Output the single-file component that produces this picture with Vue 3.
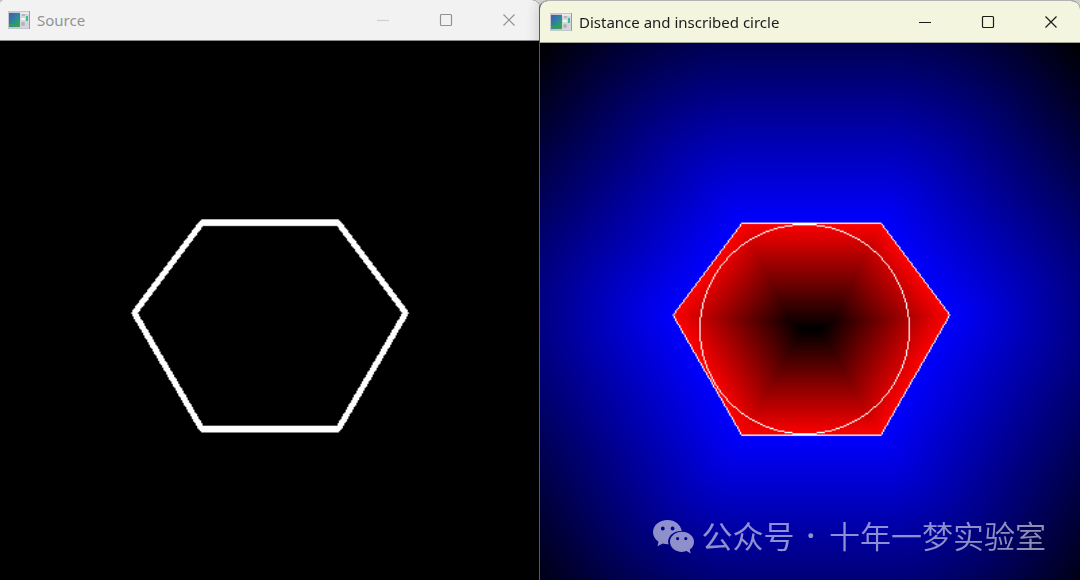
<script setup>
import { onMounted, ref } from 'vue'

const SIZE = 400
const sourceCanvas = ref(null)
const distanceCanvas = ref(null)

const windows = [
  { name: 'source', title: 'Source', canvas: sourceCanvas },
  { name: 'distance', title: 'Distance and inscribed circle', canvas: distanceCanvas },
]

const outline = [[149, 134], [250, 134], [300, 201], [250, 287], [149, 287], [99, 201]]
const contour = [[149, 133], [252, 133], [303, 201], [252, 290], [149, 290], [98, 201]]
const circle = { x: 195.5, y: 211.5, r: 77.5 }

function edges(points) {
  return points.map((p, i) => [p, points[(i + 1) % points.length]])
}

function distanceTo(list, x, y) {
  let best = Infinity
  for (const [[ax, ay], [bx, by]] of list) {
    const dx = bx - ax
    const dy = by - ay
    const t = Math.max(0, Math.min(1, ((x - ax) * dx + (y - ay) * dy) / (dx * dx + dy * dy)))
    best = Math.min(best, Math.hypot(x - ax - t * dx, y - ay - t * dy))
  }
  return best
}

// Points run clockwise on screen, so an inner point is on the same side of each edge.
function isInside(list, x, y) {
  return list.every(([[ax, ay], [bx, by]]) => (bx - ax) * (y - ay) - (by - ay) * (x - ax) >= 0)
}

function drawSource(ctx) {
  const list = edges(outline)
  const image = ctx.createImageData(SIZE, SIZE)
  for (let y = 0; y < SIZE; y++) {
    for (let x = 0; x < SIZE; x++) {
      const level = distanceTo(list, x, y) <= 2.2 ? 255 : 0
      image.data.set([level, level, level, 255], (y * SIZE + x) * 4)
    }
  }
  ctx.putImageData(image, 0, 0)
}

function drawDistance(ctx) {
  const list = edges(contour)
  const field = new Float32Array(SIZE * SIZE)
  let maxInside = 0
  let maxOutside = 0
  for (let y = 0; y < SIZE; y++) {
    for (let x = 0; x < SIZE; x++) {
      const d = distanceTo(list, x, y)
      if (isInside(list, x, y)) {
        field[y * SIZE + x] = d
        maxInside = Math.max(maxInside, d)
      } else {
        field[y * SIZE + x] = -d
        maxOutside = Math.max(maxOutside, d)
      }
    }
  }
  const image = ctx.createImageData(SIZE, SIZE)
  field.forEach((d, i) => {
    const red = d >= 0 ? 255 - (d / maxInside) * 255 : 0
    const blue = d < 0 ? 255 + (d / maxOutside) * 255 : 0
    image.data.set([red, 0, blue, 255], i * 4)
  })
  ctx.putImageData(image, 0, 0)

  ctx.fillStyle = '#fff'
  const plot = (x, y) => ctx.fillRect(x, y, 1, 1)
  for (const [[ax, ay], [bx, by]] of list) {
    const steps = Math.max(Math.abs(bx - ax), Math.abs(by - ay))
    for (let i = 0; i <= steps; i++) {
      plot(Math.round(ax + ((bx - ax) * i) / steps), Math.round(ay + ((by - ay) * i) / steps))
    }
  }
  const reach = Math.ceil(circle.r * Math.SQRT1_2)
  for (let k = 0.5; k <= reach; k++) {
    const far = Math.round(Math.sqrt(circle.r ** 2 - k * k) - 0.5) + 0.5
    for (const sx of [-1, 1]) {
      for (const sy of [-1, 1]) {
        plot(circle.x + sx * k, circle.y + sy * far)
        plot(circle.x + sx * far, circle.y + sy * k)
      }
    }
  }
}

onMounted(() => {
  drawSource(sourceCanvas.value.getContext('2d'))
  drawDistance(distanceCanvas.value.getContext('2d'))
})
</script>

<template>
  <main class="desktop">
    <section v-for="win in windows" :key="win.name" class="window" :class="win.name">
      <header class="titlebar">
        <svg class="app-icon" viewBox="0 0 22 18" aria-hidden="true">
          <defs>
            <linearGradient :id="win.name + '-screen'" x1="0" y1="0" x2="1" y2="1">
              <stop offset="0" stop-color="#5a50a8" />
              <stop offset="0.4" stop-color="#2c7fa6" />
              <stop offset="0.75" stop-color="#2f9a78" />
              <stop offset="1" stop-color="#3fae4c" />
            </linearGradient>
          </defs>
          <rect width="22" height="18" fill="#c3c8cf" />
          <rect x="1" y="2" width="11" height="14" :fill="`url(#${win.name}-screen)`" />
          <rect x="1" y="13" width="10" height="2" fill="#3c9a4a" />
          <rect x="12" y="2" width="9" height="15" fill="#d3d6da" />
          <rect x="12" y="1" width="9" height="2" fill="#e6e8ea" />
          <rect x="14" y="3" width="3" height="2" fill="#b2b5b9" />
          <rect x="18" y="5" width="2" height="5" fill="#46b898" />
          <rect x="13" y="7" width="4" height="2" fill="#f4f5f6" />
          <circle cx="15" cy="13" r="2" fill="#b0b3b6" />
          <rect x="21" y="0" width="1" height="18" fill="#999da3" />
        </svg>
        <h1 class="title">{{ win.title }}</h1>
        <div class="controls">
          <button type="button" class="minimize" aria-label="Minimize">
            <svg viewBox="0 0 14 14"><path d="M1 7.500H13" /></svg>
          </button>
          <button type="button" aria-label="Maximize">
            <svg viewBox="0 0 14 14"><rect x="1.500" y="1.500" width="11" height="11" rx="1" /></svg>
          </button>
          <button type="button" aria-label="Close">
            <svg viewBox="0 0 14 14"><path d="M1.500 1.500L12.500 12.500M12.500 1.500L1.500 12.500" /></svg>
          </button>
        </div>
      </header>
      <div class="view">
        <canvas
          :ref="(el) => { win.canvas.value = el }"
          :width="SIZE"
          :height="SIZE"
        ></canvas>
      </div>
    </section>

    <div class="watermark">
      <svg class="wechat" viewBox="0 0 42 34" aria-hidden="true">
        <path
          fill-rule="evenodd"
          d="M14.500 0C6.500 0 0 5.400 0 12.200C0 16 2.100 19.400 5.500 21.700L4.500 26.300L9.700 23.600C11.500 24.100 13.500 24.400 15.600 24.300C13.300 17.300 19.500 10.700 28.800 10.900C27.700 4.700 21.700 0 14.500 0ZM9.800 6.600A1.900 1.900 0 1 1 9.800 10.400A1.900 1.900 0 1 1 9.800 6.600ZM19.600 6.600A1.900 1.900 0 1 1 19.600 10.400A1.900 1.900 0 1 1 19.600 6.600Z"
        />
        <path
          fill-rule="evenodd"
          d="M29 11.800C22.300 11.800 17 16.300 17 21.800C17 27.400 22.300 31.900 29 31.900C30.600 31.900 32.200 31.600 33.600 31.100L37.700 33.400L36.800 29.600C39.500 27.800 41 25 41 21.800C41 16.300 35.700 11.800 29 11.800ZM24.600 17A1.600 1.600 0 1 1 24.600 20.200A1.600 1.600 0 1 1 24.600 17ZM32.800 17A1.600 1.600 0 1 1 32.800 20.200A1.600 1.600 0 1 1 32.800 17Z"
        />
      </svg>
      <span class="label">公众号</span>
      <span class="dot">·</span>
      <span class="account">十年一梦实验室</span>
    </div>
  </main>
</template>

<style>
body {
  margin: 0;
}
</style>

<style scoped>
.desktop {
  position: relative;
  display: grid;
  grid-template-columns: 1fr 1fr;
  height: 100vh;
  overflow: hidden;
  background: #dcdcdc;
}

.window {
  box-sizing: border-box;
  min-width: 0;
  display: flex;
  flex-direction: column;
  overflow: hidden;
}

.source {
  background: #000;
  border-radius: 3px 8px 0 0;
}

.distance {
  position: relative;
  margin-left: -1px;
  border-top: 1px solid #b4b4b4;
  border-left: 1px solid #5a5a5a;
  border-radius: 9px 9px 0 0;
  background: #000;
  box-shadow: 0 0 14px rgba(0, 0, 0, 0.2);
}

.titlebar {
  display: flex;
  align-items: center;
  flex: none;
  box-sizing: border-box;
  padding-left: 8px;
}

.source .titlebar {
  height: 41px;
  padding-bottom: 1px;
  background: #f2f2f2;
  border-bottom: 1px solid #888;
  color: #929292;
}

.distance .titlebar {
  height: 42px;
  margin-right: -2px;
  padding-left: 10px;
  background: #f3f5de;
  border-bottom: 1px solid #a0a294;
  color: #1b1b1b;
}

.app-icon {
  flex: none;
  width: 22px;
  height: 18px;
}

.title {
  flex: 1;
  min-width: 0;
  margin: 0 0 0 7px;
  overflow: hidden;
  white-space: nowrap;
  font: 400 15px/24px "Noto Sans", "Open Sans", sans-serif;
}

.controls {
  display: flex;
  flex: none;
  align-self: stretch;
}

.controls button {
  display: flex;
  align-items: center;
  justify-content: center;
  width: 63px;
  padding: 0;
  border: 0;
  background: none;
  color: inherit;
}

.source .minimize {
  opacity: 0.35;
}

.controls svg {
  width: 14px;
  height: 14px;
  fill: none;
  stroke: currentColor;
  stroke-width: 1.2;
}

.view {
  flex: 1;
  min-height: 0;
  overflow: hidden;
}

.view canvas {
  display: block;
  width: 100%;
  aspect-ratio: 1;
}

.watermark {
  position: absolute;
  right: 34px;
  bottom: 23px;
  display: flex;
  align-items: center;
  color: #fff;
  opacity: 0.56;
  font: 350 31px/44px "Noto Sans CJK SC", sans-serif;
  white-space: nowrap;
}

.wechat {
  width: 42px;
  height: 34px;
  margin: 3px 6px 0 0;
  fill: currentColor;
}

.label {
  font-weight: 400;
}

.dot {
  margin: 0 14px 0 12px;
  font-family: "Noto Sans", sans-serif;
  font-weight: 600;
}
</style>
